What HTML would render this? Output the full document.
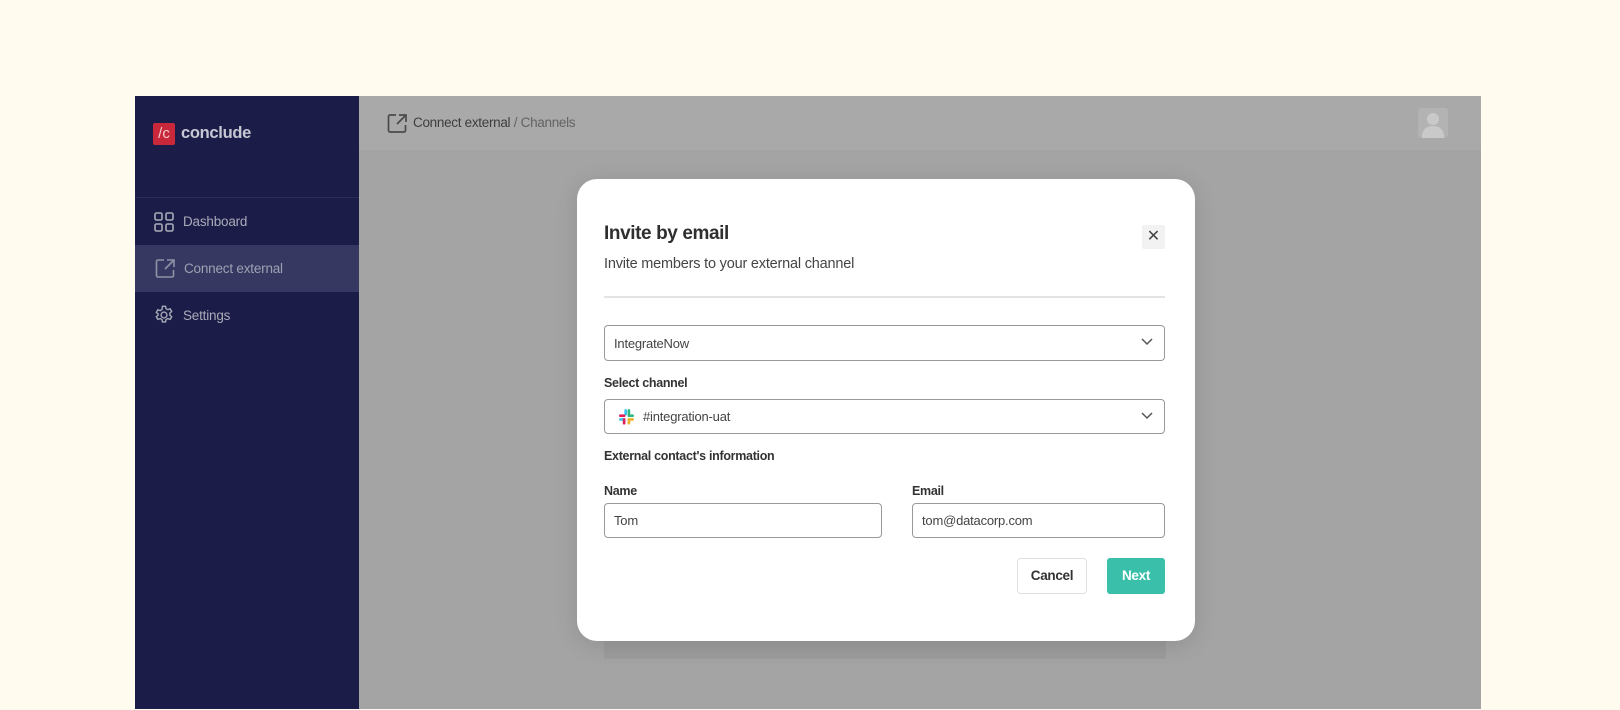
<!DOCTYPE html>
<html><head><meta charset="utf-8"><style>
*{box-sizing:border-box;margin:0;padding:0}
body{width:1620px;height:710px;background:#fffcef;font-family:"Liberation Sans",sans-serif;position:relative;overflow:hidden}
.abs{position:absolute}
.app{left:135px;top:96px;width:1346px;height:613px;background:#a4a4a4}
.side{left:135px;top:96px;width:224px;height:613px;background:#1b1c48}
.hdr{left:359px;top:96px;width:1122px;height:54px;background:#a9a9a9}
.nav{color:#a9abb8;font-size:13.5px;letter-spacing:-0.2px}
.modal{left:577px;top:179px;width:618px;height:462px;background:#fff;border-radius:20px;box-shadow:0 4px 24px rgba(0,0,0,.12)}
.lbl{font-size:12.5px;font-weight:bold;color:#333;letter-spacing:-0.3px}
.field{border:1.5px solid #999;border-radius:4px;background:#fff;font-size:13px;color:#444;padding-left:9px;display:flex;align-items:center;letter-spacing:-0.2px}
</style></head><body>
<div class="abs app"></div>
<div class="abs side"></div>
<div class="abs hdr"></div>
<div class="abs" style="left:604px;top:641px;width:562px;height:18px;background:#9c9c9c"></div>
<div class="abs" style="left:153px;top:123px;width:22px;height:22px;background:#c8283a;border-radius:2px;color:#f3c9cc;font-size:15px;line-height:22px;text-align:center">/c</div>
<div class="abs" style="left:181px;top:124px;color:#c7c8d3;font-size:16.5px;font-weight:bold;letter-spacing:-0.3px">conclude</div>
<div class="abs" style="left:135px;top:197px;width:224px;height:1px;background:#2b2c58"></div>
<svg class="abs" style="left:154px;top:212px" width="20" height="20" viewBox="0 0 20 20" fill="none" stroke="#a9abb8" stroke-width="1.6"><rect x="1" y="1" width="7" height="7" rx="1.5"/><rect x="12" y="1" width="7" height="7" rx="1.5"/><rect x="1" y="12" width="7" height="7" rx="1.5"/><rect x="12" y="12" width="7" height="7" rx="1.5"/></svg>
<div class="abs nav" style="left:183px;top:214px">Dashboard</div>
<div class="abs" style="left:135px;top:245px;width:224px;height:47px;background:#373862"></div>
<svg class="abs" style="left:155px;top:258px" width="21" height="21" viewBox="0 0 21 21" fill="none" stroke="#8f93a3" stroke-width="1.6"><path d="M9 2H3a1.5 1.5 0 0 0-1.5 1.5v14A1.5 1.5 0 0 0 3 19h14a1.5 1.5 0 0 0 1.5-1.5V12"/><path d="M12 2h7v7M19 2l-9 9"/></svg>
<div class="abs nav" style="left:184px;top:261px;color:#9ea1b1">Connect external</div>
<svg class="abs" style="left:153px;top:304px" width="22" height="22" viewBox="0 0 24 24" fill="none" stroke="#a9abb8" stroke-width="1.5"><circle cx="12" cy="12" r="3.2"/><path d="M10.3 2.5h3.4l.5 2.6 2 1.1 2.5-.9 1.7 2.9-2 1.7v2.3l2 1.7-1.7 2.9-2.5-.9-2 1.1-.5 2.6h-3.4l-.5-2.6-2-1.1-2.5.9-1.7-2.9 2-1.7V10.9l-2-1.7 1.7-2.9 2.5.9 2-1.1z"/></svg>
<div class="abs nav" style="left:183px;top:308px">Settings</div>
<svg class="abs" style="left:387px;top:113px" width="21" height="21" viewBox="0 0 21 21" fill="none" stroke="#4a4a4a" stroke-width="1.7"><path d="M9 2H3a1.5 1.5 0 0 0-1.5 1.5v14A1.5 1.5 0 0 0 3 19h14a1.5 1.5 0 0 0 1.5-1.5V12"/><path d="M12 2h7v7M19 2l-9 9"/></svg>
<div class="abs" style="left:413px;top:115px;font-size:13.5px;color:#3e3e3e;letter-spacing:-0.3px">Connect external <span style="color:#636363">/ Channels</span></div>
<div class="abs" style="left:1418px;top:108px;width:30px;height:30px;background:#b3b3b3;border-radius:3px;overflow:hidden"><div class="abs" style="left:9px;top:5px;width:12px;height:12px;border-radius:50%;background:#c9c9c9"></div><div class="abs" style="left:4px;top:18px;width:22px;height:16px;border-radius:10px 10px 0 0;background:#c9c9c9"></div></div>
<div class="abs modal"></div>
<div class="abs" style="left:604px;top:223px;font-size:19px;font-weight:bold;color:#2f2f2f;letter-spacing:-0.4px">Invite by email</div>
<div class="abs" style="left:604px;top:256px;font-size:14.5px;color:#444;letter-spacing:-0.2px">Invite members to your external channel</div>
<div class="abs" style="left:1142px;top:225px;width:23px;height:24px;background:#f2f2f2;border-radius:2px;text-align:center;line-height:24px;font-size:16px;color:#444">✕</div>
<div class="abs" style="left:604px;top:296px;width:561px;height:2px;background:#e3e3e3"></div>
<div class="abs field" style="left:604px;top:325px;width:561px;height:36px">IntegrateNow</div>
<svg class="abs" style="left:1141px;top:338px" width="12" height="8" viewBox="0 0 12 8" fill="none" stroke="#555" stroke-width="1.5"><path d="M1 1l5 5 5-5"/></svg>
<div class="abs lbl" style="left:604px;top:376px">Select channel</div>
<div class="abs field" style="left:604px;top:399px;width:561px;height:35px;padding-left:38px">#integration-uat</div>
<svg class="abs" style="left:618px;top:408px" width="17" height="17" viewBox="0 0 16 16"><rect x="6" y="1" width="2.5" height="6" rx="1.2" fill="#36c5f0"/><rect x="1" y="6" width="6" height="2.5" rx="1.2" fill="#e01e5a"/><rect x="9" y="1" width="2.5" height="6" rx="1.2" fill="#2eb67d"/><rect x="9" y="6" width="6" height="2.5" rx="1.2" fill="#2eb67d"/><rect x="1" y="9.5" width="6" height="2.5" rx="1.2" fill="#36c5f0"/><rect x="4.5" y="9.5" width="2.5" height="6" rx="1.2" fill="#e01e5a"/><rect x="9" y="9.5" width="6" height="2.5" rx="1.2" fill="#ecb22e"/><rect x="9" y="9.5" width="2.5" height="6" rx="1.2" fill="#ecb22e"/></svg>
<svg class="abs" style="left:1141px;top:412px" width="12" height="8" viewBox="0 0 12 8" fill="none" stroke="#555" stroke-width="1.5"><path d="M1 1l5 5 5-5"/></svg>
<div class="abs lbl" style="left:604px;top:449px">External contact's information</div>
<div class="abs lbl" style="left:604px;top:484px">Name</div>
<div class="abs lbl" style="left:912px;top:484px">Email</div>
<div class="abs field" style="left:604px;top:503px;width:278px;height:35px">Tom</div>
<div class="abs field" style="left:912px;top:503px;width:253px;height:35px">tom@datacorp.com</div>
<div class="abs" style="left:1017px;top:558px;width:70px;height:36px;border:1.5px solid #e0e0e0;border-radius:4px;text-align:center;line-height:33px;font-size:13.5px;font-weight:bold;color:#333;letter-spacing:-0.3px">Cancel</div>
<div class="abs" style="left:1107px;top:558px;width:58px;height:36px;background:#39bfaa;border-radius:3px;text-align:center;line-height:36px;font-size:13.5px;font-weight:bold;color:#fff;letter-spacing:-0.3px">Next</div>
</body></html>
